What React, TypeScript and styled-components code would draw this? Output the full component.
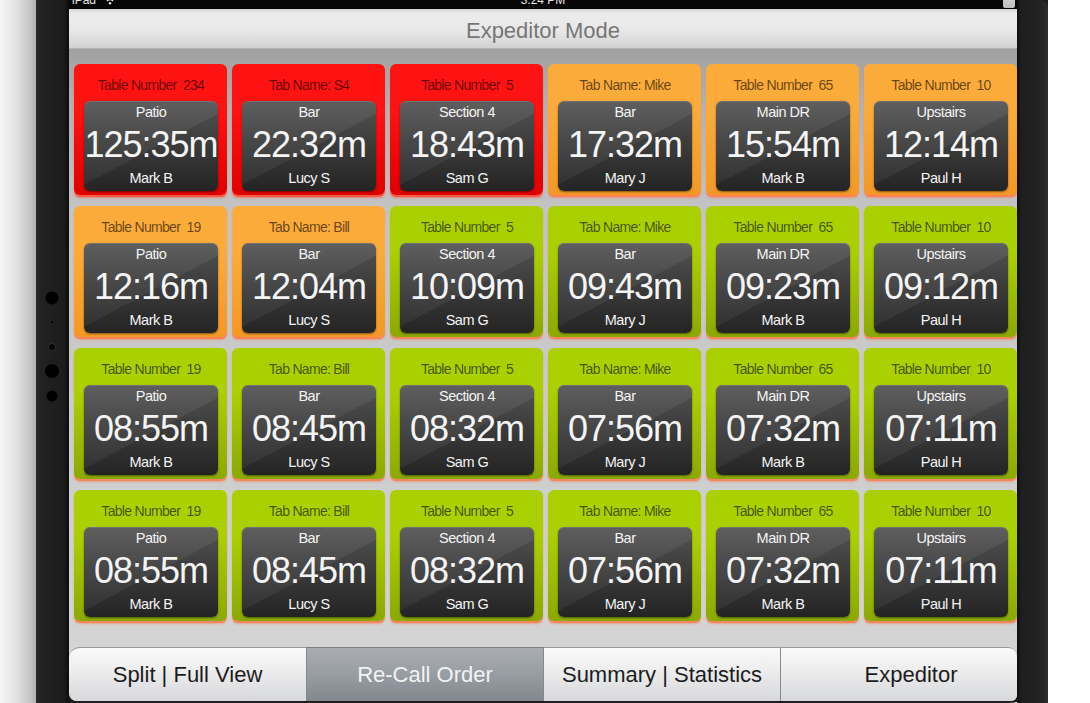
import styled, { createGlobalStyle } from "styled-components";

const GlobalStyle = createGlobalStyle`
  html, body {
    margin: 0;
    padding: 0;
    background: #fff;
  }
  body {
    font-family: "Liberation Sans", Arial, sans-serif;
  }
`;

type Tone = "red" | "orange" | "lime";

const tones: Record<Tone, { top: string; bottom: string; glow: string }> = {
	red: { top: "#ff1212", bottom: "#e00000", glow: "#ff5a44" },
	orange: { top: "#fbab3a", bottom: "#f39825", glow: "#ff7f56" },
	lime: { top: "#abd000", bottom: "#8ba900", glow: "#f2875f" },
};

type Ticket = {
	tone: Tone;
	label: string;
	area: string;
	time: string;
	server: string;
};

const columns = [
	{ label: "Table Number  19", area: "Patio", server: "Mark B" },
	{ label: "Tab Name: Bill", area: "Bar", server: "Lucy S" },
	{ label: "Table Number  5", area: "Section 4", server: "Sam G" },
	{ label: "Tab Name: Mike", area: "Bar", server: "Mary J" },
	{ label: "Table Number  65", area: "Main DR", server: "Mark B" },
	{ label: "Table Number  10", area: "Upstairs", server: "Paul H" },
];

const row = (tones: Tone[], times: string[], labels?: string[]): Ticket[] =>
	columns.map((c, i) => ({
		...c,
		label: labels?.[i] ?? c.label,
		tone: tones[i],
		time: times[i],
	}));

const tickets: Ticket[] = [
	...row(
		["red", "red", "red", "orange", "orange", "orange"],
		["125:35m", "22:32m", "18:43m", "17:32m", "15:54m", "12:14m"],
		["Table Number  234", "Tab Name: S4"]
	),
	...row(
		["orange", "orange", "lime", "lime", "lime", "lime"],
		["12:16m", "12:04m", "10:09m", "09:43m", "09:23m", "09:12m"]
	),
	...row(
		["lime", "lime", "lime", "lime", "lime", "lime"],
		["08:55m", "08:45m", "08:32m", "07:56m", "07:32m", "07:11m"]
	),
	...row(
		["lime", "lime", "lime", "lime", "lime", "lime"],
		["08:55m", "08:45m", "08:32m", "07:56m", "07:32m", "07:11m"]
	),
];

const tabs = ["Split | Full View", "Re-Call Order", "Summary | Statistics", "Expeditor"];

const Page = styled.div`
	display: flex;
	height: 703px;
	overflow: hidden;
`;

const Shadow = styled.div`
	width: 36px;
	flex-shrink: 0;
	background: linear-gradient(to right, #f6f6f6 0%, #e2e2e2 45%, #c4c4c4 85%, #b0b0b0 100%);
`;

const Device = styled.div`
	display: flex;
	flex-shrink: 0;
	background: #1d1d1d;
	border-bottom-right-radius: 40px;
`;

const Bezel = styled.div<{ $side: "left" | "right" }>`
	flex-shrink: 0;
	width: ${(p) => (p.$side === "left" ? 33 : 31)}px;
	display: flex;
	flex-direction: column;
	align-items: center;
	padding-top: ${(p) => (p.$side === "left" ? 285 : 0)}px;
	box-sizing: border-box;
	background: ${(p) =>
		p.$side === "left"
			? "linear-gradient(to right, #2c2c2c 0, #222 4px, #1c1c1c 28px, #0c0c0c 100%)"
			: "linear-gradient(to right, #0c0c0c 0, #1e1e1e 4px, #242424 26px, #2e2e2e 100%)"};
	border-top-right-radius: ${(p) => (p.$side === "right" ? 8 : 0)}px;
`;

const Screen = styled.div`
	width: 948px;
	flex-shrink: 0;
	display: flex;
	flex-direction: column;
	margin-bottom: 2px;
	background: #d4d4d4;
	border-bottom-left-radius: 8px;
	border-bottom-right-radius: 6px;
	overflow: hidden;
`;

const StatusBar = styled.div`
	height: 9px;
	flex-shrink: 0;
	background: #060606;
	overflow: hidden;
	display: grid;
	grid-template-columns: 1fr auto 1fr;
	color: #e6e6e6;
	font-size: 12px;
	& > div {
		margin-top: -9px;
		line-height: 13px;
		display: flex;
		align-items: center;
		gap: 8px;
	}
	& > .right {
		justify-content: flex-end;
		padding-right: 2px;
	}
	& > .left {
		padding-left: 3px;
	}
`;

const Battery = styled.span`
	width: 12px;
	height: 14px;
	margin-top: 1px;
	background: linear-gradient(#d8d8d8, #bdbdbd);
	border-radius: 2px;
`;

const TitleBar = styled.div`
	height: 40px;
	flex-shrink: 0;
	box-sizing: border-box;
	display: flex;
	align-items: center;
	justify-content: center;
	background: linear-gradient(#d6d6d6 0, #ececec 12%, #e8e8e8 55%, #d2d2d2 100%);
	border-bottom: 1px solid #b4b4b4;
	color: #767676;
	font-size: 22px;
	padding-top: 4px;
`;

const Board = styled.div`
	flex: 1;
	display: grid;
	grid-template-columns: repeat(6, 1fr);
	grid-auto-rows: 131px;
	column-gap: 5px;
	row-gap: 11px;
	padding: 15px 0 0 5px;
	background: linear-gradient(#a1a1a1 0, #b3b3b3 60px, #c5c5c5 170px, #d4d4d4 100%);
`;

const Card = styled.div<{ $tone: Tone }>`
	display: flex;
	flex-direction: column;
	padding: 0 9px 4px 10px;
	border-radius: 6px;
	background: linear-gradient(${(p) => tones[p.$tone].top} 0%, ${(p) => tones[p.$tone].top} 35%, ${(p) => tones[p.$tone].bottom} 100%);
	box-shadow: 0 2px 0 ${(p) => tones[p.$tone].glow}, 0 3px 2px ${(p) => tones[p.$tone].glow}99;
`;

const CardLabel = styled.div`
	height: 37px;
	flex-shrink: 0;
	box-sizing: border-box;
	padding-top: 5px;
	line-height: 32px;
	font-size: 14px;
	letter-spacing: -0.7px;
	color: rgba(0, 0, 0, 0.6);
	text-align: center;
	white-space: pre;
`;

const Panel = styled.div`
	flex: 1;
	display: flex;
	flex-direction: column;
	align-items: center;
	padding-top: 2px;
	border-radius: 6px;
	color: #f4f4f4;
	background:
		linear-gradient(152deg, rgba(255, 255, 255, 0.04) 0%, rgba(255, 255, 255, 0.04) 52%, rgba(0, 0, 0, 0.06) 52%, rgba(0, 0, 0, 0.06) 100%),
		linear-gradient(#585858 0%, #434343 40%, #323232 75%, #262626 100%);
	box-shadow: 0 1px 2px rgba(0, 0, 0, 0.45), inset 0 1px 0 rgba(255, 255, 255, 0.12);
	white-space: nowrap;
`;

const Small = styled.div`
	font-size: 14.5px;
	line-height: 18px;
	letter-spacing: -0.5px;
`;

const Clock = styled.div`
	font-size: 36px;
	line-height: 48px;
	letter-spacing: -1px;
`;

const TabBar = styled.div`
	height: 54px;
	flex-shrink: 0;
	display: grid;
	grid-template-columns: repeat(4, 1fr);
`;

const Tab = styled.div<{ $active?: boolean; $first?: boolean; $last?: boolean }>`
	display: flex;
	align-items: center;
	justify-content: center;
	box-sizing: border-box;
	padding-left: ${(p) => (p.$last ? 24 : 0)}px;
	font-size: 22px;
	color: ${(p) => (p.$active ? "#f3f3f3" : "#1c1c1c")};
	border-top: 1px solid ${(p) => (p.$active ? "#7c7f84" : "#9a9a9a")};
	border-left: ${(p) => (p.$first ? "none" : "1px solid #85888c")};
	border-top-left-radius: ${(p) => (p.$first ? 11 : 0)}px;
	border-top-right-radius: ${(p) => (p.$last ? 9 : 0)}px;
	background: ${(p) =>
		p.$active
			? "linear-gradient(#a9adb3 0%, #9a9ea5 45%, #82878e 100%)"
			: "linear-gradient(#fafafa 0%, #ececed 45%, #d7d8db 100%)"};
`;

const Margin = styled.div`
	flex: 1;
	background: #fff;
`;

const SideButtons = () => (
	<svg width="33" height="125" viewBox="0 0 33 125">
		<circle cx="16" cy="13" r="6.5" fill="#000" />
		<circle cx="16" cy="37" r="1" fill="#000" />
		<circle cx="16" cy="62" r="3.6" fill="#050505" stroke="#333" strokeWidth="0.8" />
		<circle cx="16" cy="86" r="7" fill="#000" />
		<circle cx="16" cy="111" r="5.5" fill="#000" />
	</svg>
);

const Wifi = () => (
	<svg width="12" height="10" viewBox="0 0 12 10">
		<path d="M1 4a7 7 0 0 1 10 0M3 6a4 4 0 0 1 6 0" stroke="#e6e6e6" strokeWidth="1.4" fill="none" />
		<circle cx="6" cy="8.2" r="1.2" fill="#e6e6e6" />
	</svg>
);

const App = () => {
	return (
		<>
			<GlobalStyle />
			<Page>
				<Shadow />
				<Device>
					<Bezel $side="left">
						<SideButtons />
					</Bezel>
					<Screen>
						<StatusBar>
							<div className="left">
								<span>iPad</span>
								<Wifi />
							</div>
							<div>3:24 PM</div>
							<div className="right">
								<Battery />
							</div>
						</StatusBar>
						<TitleBar>Expeditor Mode</TitleBar>
						<Board>
							{tickets.map((t, i) => (
								<Card key={i} $tone={t.tone}>
									<CardLabel>{t.label}</CardLabel>
									<Panel>
										<Small>{t.area}</Small>
										<Clock>{t.time}</Clock>
										<Small>{t.server}</Small>
									</Panel>
								</Card>
							))}
						</Board>
						<TabBar>
							{tabs.map((name, i) => (
								<Tab
									key={name}
									$first={i === 0}
									$last={i === tabs.length - 1}
									$active={name === "Re-Call Order"}
								>
									{name}
								</Tab>
							))}
						</TabBar>
					</Screen>
					<Bezel $side="right" />
				</Device>
				<Margin />
			</Page>
		</>
	);
};

export default App;
